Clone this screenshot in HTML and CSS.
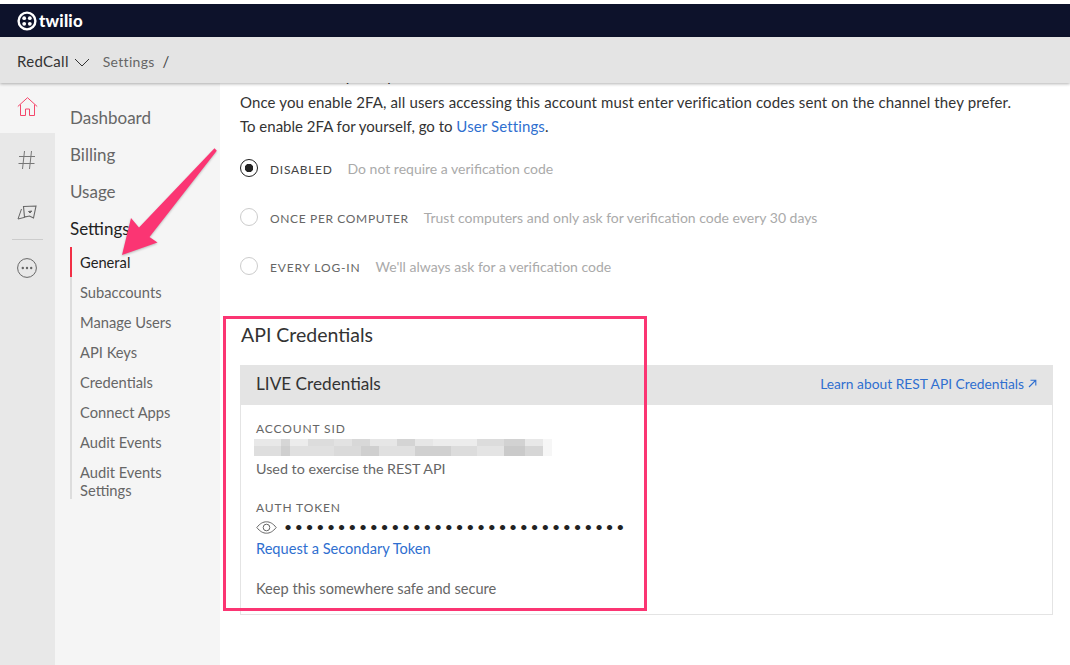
FILE: index.html
```html
<!DOCTYPE html>
<html lang="en">
<head>
<meta charset="utf-8">
<title>Twilio Settings</title>
<link rel="stylesheet" href="styles.css">
</head>
<body>
<div class="app">
  <header class="topbar">
    <svg class="logo-mark" width="20" height="20" viewBox="0 0 20 20" aria-hidden="true">
      <circle cx="10" cy="10" r="8.4" fill="none" stroke="#fff" stroke-width="2.4"/>
      <circle cx="7.2" cy="7.2" r="1.9" fill="#fff"/><circle cx="12.8" cy="7.2" r="1.9" fill="#fff"/>
      <circle cx="7.2" cy="12.8" r="1.9" fill="#fff"/><circle cx="12.8" cy="12.8" r="1.9" fill="#fff"/>
    </svg>
    <span class="logo-text">twilio</span>
  </header>
  <div class="subbar">
    <span class="project">RedCall</span>
    <svg class="chevron" width="16" height="9" viewBox="0 0 16 9" aria-hidden="true"><path d="M1 1l7 7 7-7" fill="none" stroke="#333" stroke-width="1"/></svg>
    <span class="crumb">Settings</span>
    <span class="crumb-sep">/</span>
  </div>
  <div class="body">
    <nav class="rail">
      <div class="rail-item rail-active">
        <svg width="21" height="20" viewBox="0 0 21 20" fill="none" stroke="#f4476b" stroke-width="1" aria-hidden="true"><path d="M.8 9.5L10.5.7l9.7 8.8"/><path d="M3.5 7.5v11h5v-6.5h4v6.500h5v-11"/></svg>
      </div>
      <div class="rail-item rail-hash">
        <svg width="18" height="20" viewBox="0 0 18 20" fill="none" stroke="#777" stroke-width="1" aria-hidden="true"><path d="M6.5 1L4.500 19M13.500 1l-2 18M1 6.500h16M.5 13.500h16"/></svg>
      </div>
      <div class="rail-item rail-map">
        <svg width="20" height="15" viewBox="0 0 20 15" fill="none" stroke="#666" stroke-width="1" aria-hidden="true"><path d="M4.500 4L1 14l6-1.500 1.500-1"/><path d="M6.500 1.500L19 1l-2.500 12-4-2-5 1z" stroke-width="1.100"/><path d="M11.500 6.500l1.500 1.500 1.800-2z" fill="#666"/></svg>
      </div>
      <div class="rail-divider"></div>
      <div class="rail-item rail-more">
        <svg width="20" height="20" viewBox="0 0 20 20" aria-hidden="true"><circle cx="10" cy="10" r="9.400" fill="none" stroke="#666" stroke-width="1"/><circle cx="5.800" cy="10" r="1.200" fill="#666"/><circle cx="10" cy="10" r="1.200" fill="#666"/><circle cx="14.200" cy="10" r="1.200" fill="#666"/></svg>
      </div>
    </nav>
    <aside class="subnav">
      <a class="nav-top">Dashboard</a>
      <a class="nav-top">Billing</a>
      <a class="nav-top">Usage</a>
      <a class="nav-top nav-current">Settings</a>
      <ul class="nav-sub">
        <li class="nav-sub-active">General</li>
        <li>Subaccounts</li>
        <li>Manage Users</li>
        <li>API Keys</li>
        <li>Credentials</li>
        <li>Connect Apps</li>
        <li>Audit Events</li>
        <li class="nav-sub-wrap">Audit Events Settings</li>
      </ul>
    </aside>
    <main class="main">
      <p class="para para-clipped">Admins can set your uptake of two-factor authentication here</p>
      <p class="para">Once you enable 2FA, all users accessing this account must enter verification codes sent on the channel they prefer.</p>
      <p class="para para-short">To enable 2FA for yourself, go to <a class="link">User Settings</a>.</p>
      <div class="options">
        <div class="option">
          <span class="radio radio-on"></span>
          <span class="option-label option-label-on">DISABLED</span>
          <span class="option-desc">Do not require a verification code</span>
        </div>
        <div class="option">
          <span class="radio"></span>
          <span class="option-label">ONCE PER COMPUTER</span>
          <span class="option-desc">Trust computers and only ask for verification code every 30 days</span>
        </div>
        <div class="option">
          <span class="radio"></span>
          <span class="option-label option-label-every">EVERY LOG-IN</span>
          <span class="option-desc">We'll always ask for a verification code</span>
        </div>
      </div>
      <h2 class="section-title">API Credentials</h2>
      <section class="panel">
        <div class="panel-head">
          <h3 class="panel-title">LIVE Credentials</h3>
          <a class="link panel-link">Learn about REST API Credentials
            <svg width="9" height="9" viewBox="0 0 9 9" fill="none" stroke="#2f6fd0" stroke-width="1.100" aria-hidden="true"><path d="M1 8l6.500-6.500M2.500 1.200h5.300v5.300"/></svg>
          </a>
        </div>
        <div class="panel-body">
          <div class="field-label">ACCOUNT SID</div>
          <div class="redacted"></div>
          <div class="hint hint-used">Used to exercise the REST API</div>
          <div class="field-label field-label-token">AUTH TOKEN</div>
          <div class="token-row">
            <svg width="21" height="13" viewBox="0 0 21 13" fill="none" stroke="#666" stroke-width="1" aria-hidden="true"><path d="M.8 6.500C4 2.500 7 .8 10.500.8s6.500 1.700 9.700 5.700c-3.200 4-6.200 5.700-9.700 5.700S4 10.500.8 6.500z"/><circle cx="10.500" cy="6.500" r="3.300"/></svg>
            <span class="dots">••••••••••••••••••••••••••••••••</span>
          </div>
          <a class="link token-link">Request a Secondary Token</a>
          <div class="hint hint-keep">Keep this somewhere safe and secure</div>
        </div>
      </section>
    </main>
  </div>
  <div class="callout"></div>
  <svg class="arrow" width="110" height="125" viewBox="0 0 110 125" aria-hidden="true"><path d="M104.500 3.200l2.300 2.500L39.500 92l8 5.500L12 110l9-37 8 9.500z" fill="#fb3573"/></svg>
</div>
</body>
</html>
```
FILE: styles.css
```css
* { box-sizing: border-box; }
html, body { margin: 0; height: 100%; }
body { font-family: "Lato", "Noto Sans", sans-serif; background: #fff; color: #333; overflow: hidden; }
.app { position: relative; width: 1070px; height: 665px; padding-top: 4px; display: flex; flex-direction: column; overflow: hidden; }
.topbar { height: 33px; flex: none; background: #0d122b; display: flex; align-items: center; gap: 2px; padding-left: 17px; color: #fff; }
.logo-text { font-weight: 900; font-size: 16.800px; color: #fff; letter-spacing: .2px; line-height: 20px; }
.subbar { position: relative; z-index: 2; height: 46px; flex: none; background: #e4e4e4; box-shadow: 0 1px 3px rgba(0,0,0,.3); display: flex; align-items: center; padding: 2px 0 0 17px; }
.project { font-size: 15px; color: #333; letter-spacing: .3px; }
.chevron { margin-left: 5px; margin-top: 3px; }
.crumb { font-size: 14px; color: #666; margin-left: 13px; letter-spacing: .3px; }
.crumb-sep { font-size: 15px; color: #444; margin-left: 8px; }
.body { flex: 1; display: flex; min-height: 0; }
.rail { width: 55px; flex: none; background: #e8e8e8; display: flex; flex-direction: column; align-items: center; }
.rail-item { width: 100%; display: flex; justify-content: center; align-items: center; padding-right: 1px; }
.rail-active { height: 50px; background: #f5f5f5; padding-bottom: 2px; }
.rail-hash { height: 54px; }
.rail-map { height: 51px; }
.rail-divider { width: 31px; height: 1px; background: #ccc; margin-top: 1px; }
.rail-more { height: 55px; }
.subnav { width: 165px; flex: none; background: #f5f5f5; padding: 16px 0 0 15px; display: flex; flex-direction: column; }
.nav-top { font-size: 17px; line-height: 37px; color: #666; }
.nav-current { color: #222; }
.nav-sub { list-style: none; margin: 0; padding: 0; border-left: 2px solid #ddd; font-size: 14.700px; color: #666; }
.nav-sub li { padding: 0 0 0 8px; line-height: 30px; }
.nav-sub .nav-sub-active { color: #222; border-left: 2px solid #f22f46; margin-left: -2px; padding-left: 8px; }
.nav-sub .nav-sub-wrap { line-height: 18px; padding-top: 6px; width: 110px; }
.main { flex: 1; min-width: 0; overflow: hidden; padding: 0 17px 0 20px; display: flex; flex-direction: column; }
.para { margin: 0; flex: none; font-size: 15px; letter-spacing: .12px; line-height: 24px; color: #333; white-space: nowrap; }
.para-clipped { margin: -20px 0 3px; }
.para-short { letter-spacing: 0; }
.para-short .link { letter-spacing: .12px; }
.link { color: #2f6fd0; }
.options { margin-top: 20px; display: flex; flex-direction: column; gap: 29px; }
.option { display: flex; align-items: center; height: 20px; }
.radio { width: 18px; height: 18px; border-radius: 50%; border: 1px solid #ccc; flex: none; background: #fff; margin-right: 12px; margin-left: 0; }
.radio-on { border: 1.500px solid #222; background: radial-gradient(circle, #222 0 4px, #fff 4.500px); }
.option-label { font-size: 12px; letter-spacing: .65px; color: #666; margin: 2px 15px 0 0; }
.option-label-on { color: #444; letter-spacing: .7px; }
.option-label-every { letter-spacing: .85px; }
.option-desc { font-size: 14px; color: #aaa; margin-top: 1px; }
.section-title { font-size: 19.500px; line-height: 28px; font-weight: 400; color: #333; margin: 45px 0 0 1px; }
.panel { margin-top: 16px; flex: 1; margin-bottom: 50px; display: flex; flex-direction: column; }
.panel-head { height: 40px; flex: none; background: #e4e4e4; display: flex; justify-content: space-between; align-items: center; padding: 0 16px 3px; }
.panel-title { margin: 0; font-size: 17.200px; font-weight: 400; color: #333; }
.panel-link { font-size: 13.800px; display: flex; align-items: center; gap: 4px; }
.panel-body { flex: 1; border: 1px solid #e4e4e4; border-top: 0; padding: 15px 15px 0; }
.field-label { font-size: 12px; letter-spacing: .88px; line-height: 18px; color: #666; }
.redacted { width: 298px; height: 17px; margin-left: -2px; margin-top: 1px; background-repeat: no-repeat; background-size: 100% 7px, 100% 10px; background-position: 0 0, 0 7px;
  background-image:
    linear-gradient(90deg, #e8e8e8 0 9%, #d6d6d6 9% 12%, #ececec 12% 18%, #dcdcdc 18% 27%, #e2e2e2 27% 33%, #d8d8d8 33% 39%, #e6e6e6 39% 48%, #d4d4d4 48% 54%, #e6e6e6 54% 60%, #ececec 60% 75%, #dcdcdc 75% 84%, #d2d2d2 84% 91%, #e8e8e8 91% 97%, #f6f6f6 97%),
    linear-gradient(90deg, #dedede 0 9%, #cfcfcf 9% 12%, #e0e0e0 12% 27%, #dadada 27% 36%, #cfcfcf 36% 42%, #e0e0e0 42% 54%, #d0d0d0 54% 66%, #dcdcdc 66% 75%, #e4e4e4 75% 84%, #cacaca 84% 91%, #d6d6d6 91% 97%, #f6f6f6 97%); }
.hint { font-size: 14.600px; color: #666; line-height: 20px; margin-top: 3px; }
.hint-used { font-size: 14.300px; }
.field-label-token { margin-top: 20px; }
.token-row { display: flex; align-items: center; height: 20px; gap: 7px; }
.dots { font-size: 14px; letter-spacing: 2.600px; color: #222; line-height: 20px; }
.token-link { display: block; font-size: 14.600px; line-height: 20px; margin-top: 2px; }
.hint-keep { margin-top: 20px; }
.callout { position: absolute; left: 223px; top: 316px; width: 424px; height: 295px; border: 3px solid #fb3573; }
.arrow { position: absolute; left: 110px; top: 145px; filter: drop-shadow(0 1px 1px rgba(0,0,0,.25)); }
```
